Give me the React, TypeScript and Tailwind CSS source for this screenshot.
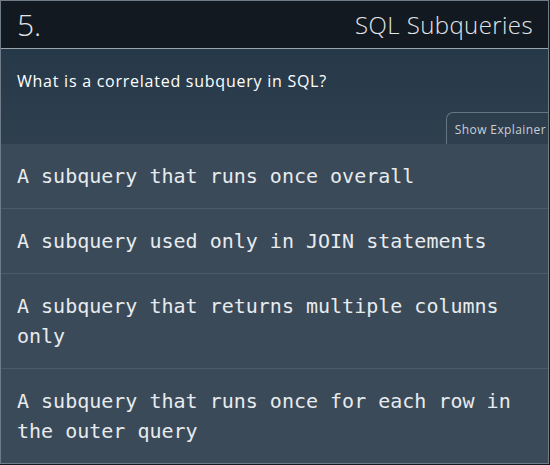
import React from 'react';

const options = [
  'A subquery that runs once overall',
  'A subquery used only in JOIN statements',
  'A subquery that returns multiple columns only',
  'A subquery that runs once for each row in the outer query',
];

export default function App() {
  return (
    <div className="w-[550px] h-[465px] bg-[#121920] overflow-hidden">
      <div className="w-[549px] h-[464px] border border-[#6f7b86] flex flex-col overflow-hidden">
        <div className="h-[48px] shrink-0 flex items-center justify-between pl-[16px] pr-[15px] bg-[#121920] border-b border-[#9aa3ab] font-['Open_Sans',sans-serif] font-light text-[#e2e5e8]">
          <span className="text-[30px] leading-none">5.</span>
          <span className="text-[24px] leading-none tracking-[0.4px]">SQL Subqueries</span>
        </div>
        <div className="h-[95px] shrink-0 flex flex-col bg-gradient-to-b from-[#263949] to-[#2f3f4e]">
          <p className="pl-[16px] pt-[20px] text-[16px] tracking-[0.75px] text-white font-['Open_Sans',sans-serif]">
            What is a correlated subquery in SQL?
          </p>
          <div className="mt-auto flex justify-end">
            <button className="h-[32px] pl-[8px] pr-[2px] pt-[2px] rounded-tl-[7px] border border-b-0 border-r-0 border-[#66757f] text-[12px] tracking-[0.4px] text-[#c9cfd4] font-['Open_Sans',sans-serif]">
              Show Explainer
            </button>
          </div>
        </div>
        <div className="flex-1 bg-[#3a4a58] font-['DejaVu_Sans_Mono',monospace] text-[20px] leading-[30px] text-[#e8ebee]">
          {options.map((o, i) => (
            <div
              key={i}
              className={`pl-[16px] pr-[16px] py-[17px] ${i < options.length - 1 ? 'border-b border-[#4c5b68]' : ''}`}
            >
              {o}
            </div>
          ))}
        </div>
      </div>
    </div>
  );
}
